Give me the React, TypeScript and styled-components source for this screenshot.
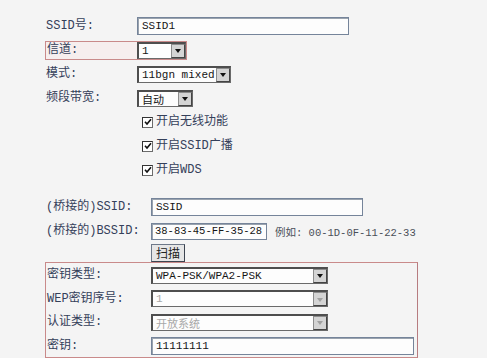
import styled, { createGlobalStyle } from "styled-components";

const GlobalStyle = createGlobalStyle`
  html, body {
    margin: 0;
    padding: 0;
    background: #f4f4f4;
  }
  body {
    width: 487px;
    height: 358px;
    overflow: hidden;
    font-family: "Liberation Mono", "Noto Sans CJK SC", monospace;
    font-size: 12px;
    color: #34405a;
  }
`;

const Page = styled.div`
  padding: 14px 0 0 45px;
  display: flex;
  flex-direction: column;
`;

const Row = styled.div<{ $h?: number; $indent?: number }>`
  display: flex;
  align-items: center;
  height: ${(p) => p.$h ?? 24}px;
  padding-left: ${(p) => p.$indent ?? 0}px;
`;

const Label = styled.span<{ $w: number }>`
  width: ${(p) => p.$w}px;
  padding-left: 1px;
  box-sizing: border-box;
  white-space: nowrap;
  line-height: 1;
`;

const RedBox = styled.div`
  display: flex;
  align-items: center;
  height: 19px;
  box-sizing: border-box;
  border: 1px solid #c98a8a;
  background: #f6eeee;
`;

const KeyBox = styled.div`
  display: flex;
  flex-direction: column;
  width: 373px;
  box-sizing: border-box;
  border: 1px solid #c98a8a;
  border-right-color: #b77c80;
`;

const Spacer = styled.div<{ $h: number }>`
  height: ${(p) => p.$h}px;
`;

const TextBox = styled.div<{ $w: number; $h?: number; $fs?: number }>`
  width: ${(p) => p.$w}px;
  height: ${(p) => p.$h ?? 18}px;
  box-sizing: border-box;
  background: #fdfdfd;
  border: 1px solid #75849a;
  box-shadow: inset 1px 1px 0 #9aa3ae;
  display: flex;
  align-items: center;
  padding-left: ${(p) => (p.$fs ? 3 : 4)}px;
  font-size: ${(p) => p.$fs ?? 11}px;
  color: #151515;
  white-space: nowrap;
  overflow: hidden;
`;

const SelectBox = styled.div<{ $w: number; $h?: number; $off?: boolean }>`
  width: ${(p) => p.$w}px;
  height: ${(p) => p.$h ?? 17}px;
  box-sizing: border-box;
  background: #fdfdfd;
  border: 1px solid #6a6a6a;
  border-top: 2px solid #4e4e4e;
  border-left: 2px solid #4e4e4e;
  display: flex;
  align-items: center;
  justify-content: space-between;
  padding-left: 3px;
  font-size: 11px;
  color: ${(p) => (p.$off ? "#a8a8a8" : "#151515")};
  white-space: nowrap;
`;

const ArrowBtn = styled.span<{ $off?: boolean }>`
  width: 14px;
  height: 14px;
  box-sizing: border-box;
  background: #d4d4d4;
  border: 1px solid #8c8c8c;
  border-right-color: #444;
  border-bottom-color: #444;
  display: flex;
  align-items: center;
  justify-content: center;
  &::after {
    content: "";
    border-left: 3.5px solid transparent;
    border-right: 3.5px solid transparent;
    border-top: 4px solid ${(p) => (p.$off ? "#a0a0a0" : "#111")};
    margin-top: 1px;
  }
`;

const Check = styled.span`
  width: 11px;
  height: 11px;
  box-sizing: border-box;
  background: #fff;
  border: 1px solid #6c6c6c;
  border-top-color: #333;
  border-left-color: #333;
  display: flex;
  align-items: center;
  justify-content: center;
  margin-right: 3px;
`;

const CheckText = styled.span`
  line-height: 1;
`;

const Button = styled.div`
  width: 34px;
  height: 18px;
  box-sizing: border-box;
  background: #e6e6e6;
  border: 1px solid #6d7888;
  border-right-color: #3c4450;
  border-bottom-color: #3c4450;
  display: flex;
  align-items: center;
  justify-content: center;
  font-size: 12px;
  color: #222;
`;

const Hint = styled.span`
  margin-left: 8px;
  font-size: 10.5px;
  color: #4a4f58;
  white-space: nowrap;
`;

const Select = ({
  w,
  value,
  off,
}: {
  w: number;
  value: string;
  off?: boolean;
}) => (
  <SelectBox $w={w} $off={off}>
    <span>{value}</span>
    <ArrowBtn $off={off} />
  </SelectBox>
);

const CheckRow = ({ text }: { text: string }) => (
  <Row $indent={97}>
    <Check>
      <svg width="8" height="8" viewBox="0 0 8 8">
        <path d="M1 3.8 L3 6 L7 1.2" fill="none" stroke="#111" strokeWidth="1.6" />
      </svg>
    </Check>
    <CheckText>{text}</CheckText>
  </Row>
);

const App = () => {
  const keyRows = [
    { label: "密钥类型:", value: "WPA-PSK/WPA2-PSK", off: false, h: 24 },
    { label: "WEP密钥序号:", value: "1", off: true, h: 23 },
    { label: "认证类型:", value: "开放系统", off: true, h: 24 },
  ];

  return (
    <>
      <GlobalStyle />
      <Page>
        <Row>
          <Label $w={92}>SSID号:</Label>
          <TextBox $w={212}>SSID1</TextBox>
        </Row>
        <Row>
          <RedBox>
            <Label $w={91}>信道:</Label>
            <Select w={49} value="1" />
          </RedBox>
        </Row>
        <Row>
          <Label $w={92}>模式:</Label>
          <Select w={94} value="11bgn mixed" />
        </Row>
        <Row>
          <Label $w={92}>频段带宽:</Label>
          <Select w={56} value="自动" />
        </Row>
        <CheckRow text="开启无线功能" />
        <CheckRow text="开启SSID广播" />
        <CheckRow text="开启WDS" />
        <Spacer $h={13} />
        <Row>
          <Label $w={106}>(桥接的)SSID:</Label>
          <TextBox $w={212}>SSID</TextBox>
        </Row>
        <Row>
          <Label $w={106}>(桥接的)BSSID:</Label>
          <TextBox $w={116} $h={17} $fs={10.5}>
            38-83-45-FF-35-28
          </TextBox>
          <Hint>例如: 00-1D-0F-11-22-33</Hint>
        </Row>
        <Row $h={19} $indent={106}>
          <Button>扫描</Button>
        </Row>
        <KeyBox>
          {keyRows.map((r) => (
            <Row key={r.label} $h={r.h}>
              <Label $w={105}>{r.label}</Label>
              <Select w={177} value={r.value} off={r.off} />
            </Row>
          ))}
          <Row $h={23}>
            <Label $w={105}>密钥:</Label>
            <TextBox $w={263}>11111111</TextBox>
          </Row>
        </KeyBox>
      </Page>
    </>
  );
};

export default App;
